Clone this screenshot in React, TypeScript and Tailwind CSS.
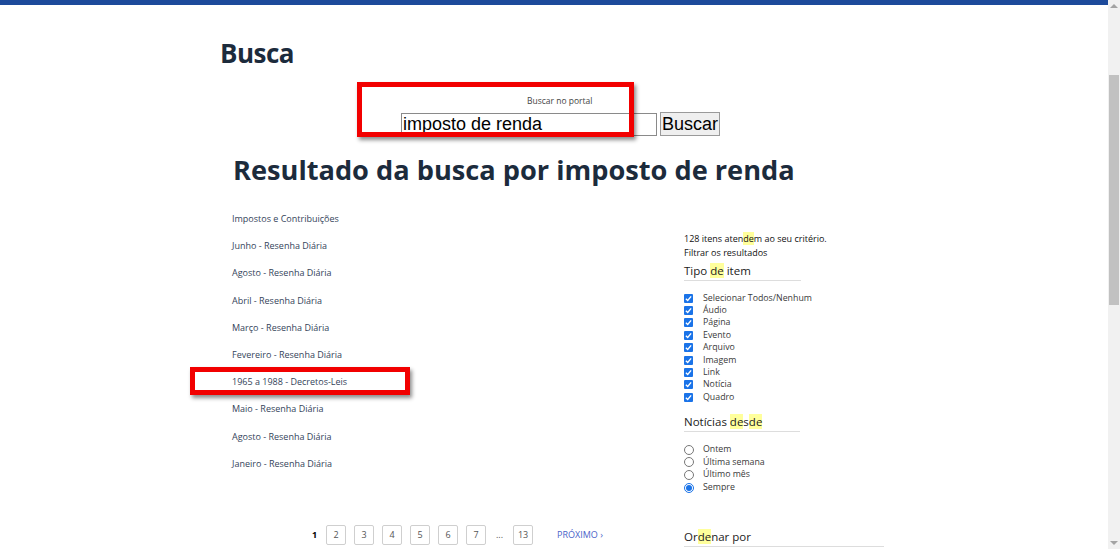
import React from 'react'

const results = [
  'Impostos e Contribuições',
  'Junho - Resenha Diária',
  'Agosto - Resenha Diária',
  'Abril - Resenha Diária',
  'Março - Resenha Diária',
  'Fevereiro - Resenha Diária',
  '1965 a 1988 - Decretos-Leis',
  'Maio - Resenha Diária',
  'Agosto - Resenha Diária',
  'Janeiro - Resenha Diária',
]

const tipos = ['Selecionar Todos/Nenhum', 'Áudio', 'Página', 'Evento', 'Arquivo', 'Imagem', 'Link', 'Notícia', 'Quadro']
const desde = ['Ontem', 'Última semana', 'Último mês', 'Sempre']

function Hl({ children }: { children: React.ReactNode }) {
  return <span className="bg-[#ffff9c]">{children}</span>
}

function RedBox({ className }: { className: string }) {
  return (
    <div
      className={
        'pointer-events-none absolute border-[5px] border-[#f20000] shadow-[2px_3px_4px_rgba(0,0,0,0.45)] ' + className
      }
    />
  )
}

export default function App() {
  return (
    <div className="flex h-[549px] w-[1120px] overflow-hidden bg-white font-['Open_Sans',sans-serif] text-[#1c2b3c]">
      <div className="flex-1">
        <div className="h-[5px] bg-[#1d4a9b]" />
        <div className="pl-[220px] pt-[33px]">
          <h1 className="text-[26px] font-bold leading-[30px] tracking-[-0.5px] text-[#1c2b3c]">Busca</h1>

          {/* search */}
          <div className="relative ml-[181px] mt-[28px] w-[320px]">
            <RedBox className="-left-[44px] -top-[14px] h-[55px] w-[277px]" />
            <div className="pl-[126px] text-[8.5px] leading-[10px] text-[#444]">Buscar no portal</div>
            <div className="mt-[6px] flex items-center gap-[3px] font-['Liberation_Sans',sans-serif]">
              <div className="flex h-[23px] w-[256px] items-center border border-[#8a8a8a] px-[1px] text-[18px] text-black">
                imposto de renda
              </div>
              <div className="flex h-[24px] items-center border border-[#9a9a9a] bg-[#efefef] px-[1px] text-[18px] text-black">
                Buscar
              </div>
            </div>
          </div>

          <h2 className="ml-[13px] mt-[16px] text-[27.2px] font-bold leading-[36px] text-[#1c2b3c]">
            Resultado da busca por imposto de renda
          </h2>

          <div className="mt-[24px] flex">
            {/* results */}
            <div className="w-[464px] pl-[12px]">
              <ul className="flex flex-col">
                {results.map((r, i) => (
                  <li key={i} className="relative h-[27.2px] text-[9px] leading-[14px] text-[#34445a]">
                    {i === 6 && <RedBox className="-left-[42px] -top-[8px] h-[28px] w-[220px]" />}
                    {r}
                  </li>
                ))}
              </ul>
              <div className="ml-[80px] mt-[41px] flex items-center gap-[8px] text-[9px] text-[#555]">
                <span className="w-[6px] font-bold text-black">1</span>
                {['2', '3', '4', '5', '6', '7'].map(n => (
                  <span key={n} className="flex h-[20px] w-[20px] items-center justify-center rounded-[2px] border border-[#cfcfcf]">
                    {n}
                  </span>
                ))}
                <span className="px-[2px]">...</span>
                <span className="flex h-[20px] w-[20px] items-center justify-center rounded-[2px] border border-[#cfcfcf]">13</span>
                <span className="ml-[16px] text-[#4a63c9]">PRÓXIMO ›</span>
              </div>
            </div>

            {/* filters */}
            <div className="mt-[20px] w-[200px] text-[#111]">
              <div className="text-[9px] leading-[14px]">
                128 itens aten<Hl>de</Hl>m ao seu critério.
              </div>
              <div className="text-[9px] leading-[14px]">Filtrar os resultados</div>
              <div className="mt-[2px] w-[117px] border-b border-[#ddd] pb-[1px] text-[11.5px] leading-[17px] text-[#222]">
                Tipo <Hl>de</Hl> item
              </div>
              <div className="mt-[11px] flex flex-col">
                {tipos.map(t => (
                  <label key={t} className="flex h-[12.4px] items-center gap-[10px] text-[8.8px] text-[#3a3a3a]">
                    <span className="flex h-[9px] w-[9px] items-center justify-center rounded-[1px] bg-[#1a73e8]">
                      <svg width="7" height="7" viewBox="0 0 8 8">
                        <path d="M1 4.2 3.1 6.2 7 1.6" fill="none" stroke="white" strokeWidth="1.6" />
                      </svg>
                    </span>
                    {t}
                  </label>
                ))}
              </div>
              <div className="mt-[9px] w-[116px] border-b border-[#ddd] pb-[1px] text-[11.5px] leading-[17px] text-[#222]">
                Notícias <Hl>de</Hl>s<Hl>de</Hl>
              </div>
              <div className="mt-[12px] flex flex-col">
                {desde.map((d, i) => (
                  <label key={d} className="flex h-[12.6px] items-center gap-[9px] text-[8.8px] text-[#3a3a3a]">
                    <span
                      className={
                        i === 3
                          ? 'flex h-[10px] w-[10px] items-center justify-center rounded-full border border-[#1a73e8]'
                          : 'h-[10px] w-[10px] rounded-full border border-[#777]'
                      }
                    >
                      {i === 3 && <span className="h-[6px] w-[6px] rounded-full bg-[#1a73e8]" />}
                    </span>
                    {d}
                  </label>
                ))}
              </div>
              <div className="mt-[34px] w-[200px] border-b border-[#ddd] pb-[1px] text-[11.5px] leading-[17px] text-[#222]">
                Or<Hl>de</Hl>nar por
              </div>
            </div>
          </div>
        </div>
      </div>

      {/* scrollbar */}
      <div className="flex w-[12px] flex-col items-center bg-[#f1f1f1]">
        <div className="mt-[4px] h-0 w-0 border-x-[4px] border-b-[4px] border-x-transparent border-b-[#a3a3a3]" />
        <div className="mt-[67px] h-[230px] w-[10px] bg-[#c1c1c1]" />
        <div className="flex-1" />
        <div className="mb-[4px] h-0 w-0 border-x-[4px] border-t-[4px] border-x-transparent border-t-[#a3a3a3]" />
      </div>
    </div>
  )
}
